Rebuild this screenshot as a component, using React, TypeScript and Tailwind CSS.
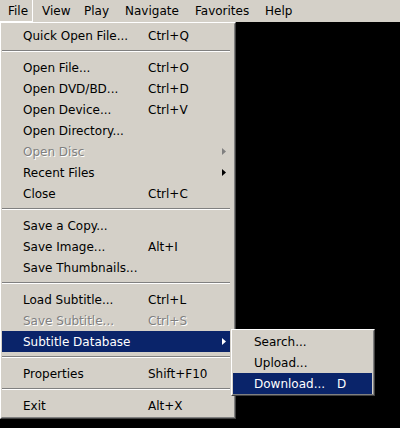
import React from "react";

type Row =
  | { kind: "sep" }
  | {
      kind: "item";
      label: string;
      shortcut?: string;
      arrow?: boolean;
      disabled?: boolean;
      active?: boolean;
    };

const mainRows: Row[] = [
  { kind: "item", label: "Quick Open File...", shortcut: "Ctrl+Q" },
  { kind: "sep" },
  { kind: "item", label: "Open File...", shortcut: "Ctrl+O" },
  { kind: "item", label: "Open DVD/BD...", shortcut: "Ctrl+D" },
  { kind: "item", label: "Open Device...", shortcut: "Ctrl+V" },
  { kind: "item", label: "Open Directory..." },
  { kind: "item", label: "Open Disc", arrow: true, disabled: true },
  { kind: "item", label: "Recent Files", arrow: true },
  { kind: "item", label: "Close", shortcut: "Ctrl+C" },
  { kind: "sep" },
  { kind: "item", label: "Save a Copy..." },
  { kind: "item", label: "Save Image...", shortcut: "Alt+I" },
  { kind: "item", label: "Save Thumbnails..." },
  { kind: "sep" },
  { kind: "item", label: "Load Subtitle...", shortcut: "Ctrl+L" },
  { kind: "item", label: "Save Subtitle...", shortcut: "Ctrl+S", disabled: true },
  { kind: "item", label: "Subtitle Database", arrow: true, active: true },
  { kind: "sep" },
  { kind: "item", label: "Properties", shortcut: "Shift+F10" },
  { kind: "sep" },
  { kind: "item", label: "Exit", shortcut: "Alt+X" },
];

const subRows: Row[] = [
  { kind: "item", label: "Search..." },
  { kind: "item", label: "Upload..." },
  { kind: "item", label: "Download...", shortcut: "D", active: true },
];

function Arrow({ color }: { color: string }) {
  return (
    <svg width="4" height="7" viewBox="0 0 4 7" className="block">
      <polygon points="0,0 4,3.5 0,7" fill={color} />
    </svg>
  );
}

function Frame({ children, className }: { children: React.ReactNode; className: string }) {
  return (
    <div
      className={
        "absolute border border-t-white border-l-white border-r-[#404040] border-b-[#404040] " +
        className
      }
    >
      <div className="border border-t-[#d4d0c8] border-l-[#d4d0c8] border-r-[#808080] border-b-[#808080] bg-[#d4d0c8]">
        {children}
      </div>
    </div>
  );
}

function MenuRows({ rows, labelW, mr }: { rows: Row[]; labelW: string; mr: string }) {
  return (
    <>
      {rows.map((r, i) => {
        if (r.kind === "sep") {
          return (
            <div key={i} className={"h-[11px] pt-[4px] " + mr}>
              <div className="h-[1px] bg-[#808080]" />
              <div className="h-[1px] bg-white" />
            </div>
          );
        }
        const txt = r.active
          ? "text-white"
          : r.disabled
          ? "text-[#808080] [text-shadow:1px_1px_0_#ffffff]"
          : "text-black";
        return (
          <div
            key={i}
            className={
              "relative flex h-[21px] items-center pl-[21px] whitespace-nowrap " +
              mr +
              " " +
              (r.active ? "bg-[#0a246a] " : "") +
              txt
            }
          >
            <span className={"shrink-0 " + labelW}>{r.label}</span>
            {r.shortcut && <span>{r.shortcut}</span>}
            {r.arrow && (
              <span className="absolute right-[4px] top-[7px]">
                <Arrow color={r.active ? "#ffffff" : r.disabled ? "#808080" : "#000000"} />
              </span>
            )}
          </div>
        );
      })}
    </>
  );
}

export default function App() {
  return (
    <div
      className="relative h-[428px] w-[400px] overflow-hidden bg-black text-[12px] leading-none"
      style={{ fontFamily: '"DejaVu Sans", Verdana, sans-serif' }}
    >
      <div className="flex h-[22px] items-stretch bg-[#d4d0c8] text-black">
        <div className="flex w-[33px] items-center border-r border-b border-white pl-[8px]">File</div>
        <div className="flex w-[42px] items-center pl-[9px]">View</div>
        <div className="flex w-[41px] items-center pl-[9px]">Play</div>
        <div className="flex w-[70px] items-center pl-[9px]">Navigate</div>
        <div className="flex w-[70px] items-center pl-[9px]">Favorites</div>
        <div className="flex items-center pl-[9px]">Help</div>
      </div>

      <Frame className="left-0 top-[22px] w-[236px]">
        <div className="py-[1px]">
          <MenuRows rows={mainRows} labelW="w-[125px]" mr="mr-[4px]" />
        </div>
      </Frame>

      <Frame className="left-[231px] top-[329px] w-[144px]">
        <MenuRows rows={subRows} labelW="w-[83px]" mr="mr-[1px]" />
      </Frame>
    </div>
  );
}
